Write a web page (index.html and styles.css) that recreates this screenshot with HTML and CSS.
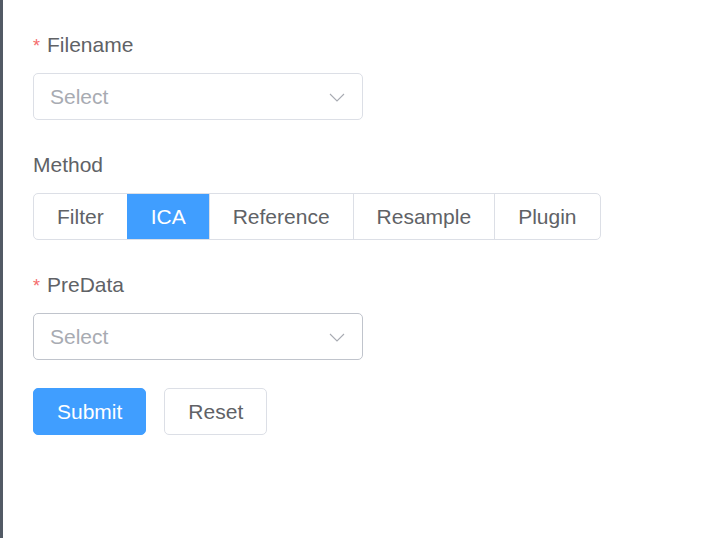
FILE: index.html
```html
<!DOCTYPE html>
<html lang="en">
<head>
<meta charset="utf-8">
<title>Form</title>
<link rel="stylesheet" href="styles.css">
</head>
<body>
<main class="page">
  <form class="form">
    <div class="form-item">
      <label class="label"><span class="req">*</span>Filename</label>
      <div class="select">
        <span class="placeholder">Select</span>
        <svg class="arrow" width="16" height="9" viewBox="0 0 16 9"><path d="M1 1 L8 8 L15 1" fill="none" stroke="#a8abb2" stroke-width="1.1"/></svg>
      </div>
    </div>
    <div class="form-item">
      <label class="label">Method</label>
      <div class="radio-group">
        <span class="radio">Filter</span>
        <span class="radio active">ICA</span>
        <span class="radio">Reference</span>
        <span class="radio">Resample</span>
        <span class="radio">Plugin</span>
      </div>
    </div>
    <div class="form-item form-item-last">
      <label class="label"><span class="req">*</span>PreData</label>
      <div class="select select-hover">
        <span class="placeholder">Select</span>
        <svg class="arrow" width="16" height="9" viewBox="0 0 16 9"><path d="M1 1 L8 8 L15 1" fill="none" stroke="#a8abb2" stroke-width="1.1"/></svg>
      </div>
    </div>
    <div class="actions">
      <button type="button" class="btn btn-primary">Submit</button>
      <button type="button" class="btn">Reset</button>
    </div>
  </form>
</main>
</body>
</html>
```
FILE: styles.css
```css
html, body {
  margin: 0;
  padding: 0;
  height: 100%;
}
body {
  background: #ffffff;
  font-family: "Liberation Sans", Arial, sans-serif;
  color: #606266;
}
.page {
  box-sizing: border-box;
  min-height: 100vh;
  border-left: 3px solid #525a65;
  padding: 33px 0 0 30px;
}
.form {
  display: flex;
  flex-direction: column;
}
.form-item {
  display: flex;
  flex-direction: column;
  align-items: flex-start;
  margin-bottom: 33px;
}
.form-item-last {
  margin-bottom: 28px;
}
.label {
  font-size: 21px;
  line-height: 24px;
  height: 24px;
  margin-bottom: 16px;
  color: #606266;
}
.req {
  color: #f56c6c;
  margin-right: 7px;
  font-size: 18px;
}
.select {
  box-sizing: border-box;
  width: 330px;
  height: 47px;
  border: 1px solid #dcdfe6;
  border-radius: 5px;
  display: flex;
  align-items: center;
  justify-content: space-between;
  padding: 1px 17px 0 16px;
}
.select-hover {
  border-color: #c0c4cc;
}
.placeholder {
  font-size: 21px;
  color: #a8abb2;
}
.arrow {
  display: block;
}
.radio-group {
  display: flex;
  border: 1px solid #dcdfe6;
  border-radius: 5px;
  overflow: hidden;
  height: 47px;
  box-sizing: border-box;
}
.radio {
  display: flex;
  align-items: center;
  padding: 1px 23px 0;
  font-size: 21px;
  color: #606266;
  border-left: 1px solid #dcdfe6;
}
.radio:first-child {
  border-left: none;
}
.radio.active {
  background: #409eff;
  color: #ffffff;
  border-left-color: #409eff;
}
.actions {
  display: flex;
  gap: 18px;
}
.btn {
  box-sizing: border-box;
  height: 47px;
  padding: 1px 23px 0;
  font-family: "Liberation Sans", Arial, sans-serif;
  font-size: 21px;
  color: #606266;
  background: #ffffff;
  border: 1px solid #dcdfe6;
  border-radius: 5px;
  cursor: pointer;
}
.btn-primary {
  background: #409eff;
  border-color: #409eff;
  color: #ffffff;
}
```
